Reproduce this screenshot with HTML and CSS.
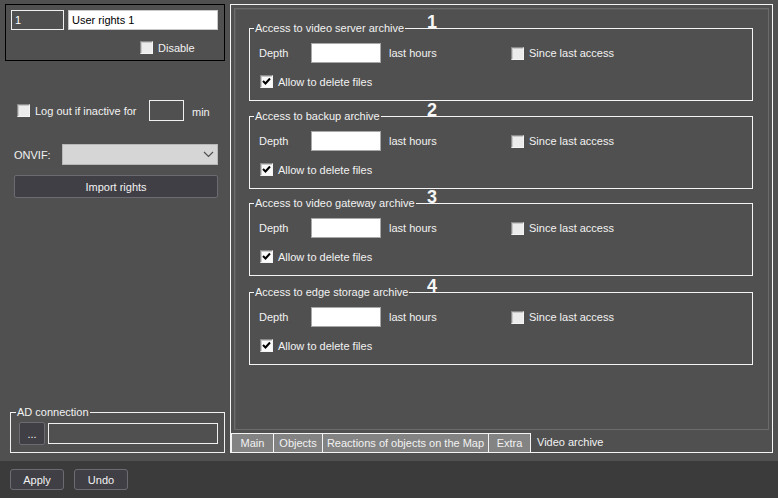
FILE: index.html
```html
<!DOCTYPE html>
<html lang="en">
  <head>
    <meta charset="UTF-8" />
    <title>User rights</title>
    <link rel="stylesheet" href="styles.css">
  </head>
  <body>
    <div class="window">
      <div class="main">
        <!-- left column -->
        <div class="side">
          <div class="user-box">
            <div class="user-row">
              <input class="field-dark num" type="text" value="1" />
              <input class="field-light name" type="text" value="User rights 1" />
            </div>
            <div class="disable-row">
              <span class="check"></span>
              <span class="check-label">Disable</span>
            </div>
          </div>

          <div class="logout-row">
            <span class="check"></span>
            <span class="logout-label">Log out if inactive for</span>
            <input class="field-dark minutes" type="text" value="" />
            <span class="min-label">min</span>
          </div>

          <div class="onvif-row">
            <span class="onvif-label">ONVIF:</span>
            <div class="select">
              <svg width="11" height="7" viewBox="0 0 11 7"><polyline points="1,1 5.5,5.5 10,1" fill="none" stroke="#505050" stroke-width="1.2"/></svg>
            </div>
          </div>

          <button class="btn import">Import rights</button>

          <fieldset class="ad-box">
            <legend>AD connection</legend>
            <div class="ad-row">
              <button class="btn dots">...</button>
              <input class="field-dark ad-field" type="text" value="" />
            </div>
          </fieldset>
        </div>

        <!-- right panel -->
        <div class="panel">
          <div class="page">
            <fieldset class="group g1">
              <legend>Access to video server archive</legend>
              <span class="mark">1</span>
              <div class="row depth-row">
                <span class="depth">Depth</span>
                <input class="hours" type="text" value="" />
                <span class="last">last hours</span>
                <span class="check"></span>
                <span class="check-label">Since last access</span>
              </div>
              <div class="row delete-row">
                <span class="check on"><svg width="11" height="11" viewBox="0 0 11 11"><path d="M2 5 L4.5 7.5 L9 2.5" fill="none" stroke="#000" stroke-width="2"/></svg></span>
                <span class="check-label">Allow to delete files</span>
              </div>
            </fieldset>

            <fieldset class="group g2">
              <legend>Access to backup archive</legend>
              <span class="mark">2</span>
              <div class="row depth-row">
                <span class="depth">Depth</span>
                <input class="hours" type="text" value="" />
                <span class="last">last hours</span>
                <span class="check"></span>
                <span class="check-label">Since last access</span>
              </div>
              <div class="row delete-row">
                <span class="check on"><svg width="11" height="11" viewBox="0 0 11 11"><path d="M2 5 L4.5 7.5 L9 2.5" fill="none" stroke="#000" stroke-width="2"/></svg></span>
                <span class="check-label">Allow to delete files</span>
              </div>
            </fieldset>

            <fieldset class="group g3">
              <legend>Access to video gateway archive</legend>
              <span class="mark">3</span>
              <div class="row depth-row">
                <span class="depth">Depth</span>
                <input class="hours" type="text" value="" />
                <span class="last">last hours</span>
                <span class="check"></span>
                <span class="check-label">Since last access</span>
              </div>
              <div class="row delete-row">
                <span class="check on"><svg width="11" height="11" viewBox="0 0 11 11"><path d="M2 5 L4.5 7.5 L9 2.5" fill="none" stroke="#000" stroke-width="2"/></svg></span>
                <span class="check-label">Allow to delete files</span>
              </div>
            </fieldset>

            <fieldset class="group g4">
              <legend>Access to edge storage archive</legend>
              <span class="mark">4</span>
              <div class="row depth-row">
                <span class="depth">Depth</span>
                <input class="hours" type="text" value="" />
                <span class="last">last hours</span>
                <span class="check"></span>
                <span class="check-label">Since last access</span>
              </div>
              <div class="row delete-row">
                <span class="check on"><svg width="11" height="11" viewBox="0 0 11 11"><path d="M2 5 L4.5 7.5 L9 2.5" fill="none" stroke="#000" stroke-width="2"/></svg></span>
                <span class="check-label">Allow to delete files</span>
              </div>
            </fieldset>
          </div>

          <div class="tabs">
            <span class="tab t-main">Main</span>
            <span class="tab t-objects">Objects</span>
            <span class="tab t-reactions">Reactions of objects on the Map</span>
            <span class="tab t-extra">Extra</span>
            <span class="tab-active">Video archive</span>
          </div>
        </div>
      </div>

      <div class="footer">
        <button class="btn foot">Apply</button>
        <button class="btn foot">Undo</button>
      </div>
    </div>
  </body>
</html>
```

FILE: styles.css
```css
* {
  margin: 0;
  padding: 0;
  box-sizing: border-box;
}

body {
  width: 778px;
  height: 498px;
  overflow: hidden;
  background: #505050;
  font-family: 'Liberation Sans', Arial, sans-serif;
  font-size: 11px;
  color: #f2f2f2;
}
.window {
  display: flex;
  flex-direction: column;
  height: 498px;
}
.main {
  display: flex;
  height: 461px;
}

/* --- inputs, checks, buttons --- */
input {
  font-family: inherit;
  font-size: 11px;
  outline: none;
}
.field-dark {
  background: #505050;
  border: 1px solid #f0f0f0;
  color: #fff;
  padding: 0 3px;
}
.field-light {
  background: #fff;
  border: 1px solid #c8c8c8;
  color: #000;
  padding: 0 3px;
}
.check {
  flex: none;
  display: inline-flex;
  align-items: center;
  justify-content: center;
  width: 13px;
  height: 13px;
  background: #ececec;
  border: 1px solid;
  border-color: #8a8a8a #f4f4f4 #f4f4f4 #8a8a8a;
  box-shadow: inset 1px 1px 0 #c9c9c9;
}
.check.on {
  background: #fafafa;
}
.check-label {
  margin-left: 5px;
  white-space: nowrap;
}
.btn {
  background: #403f46;
  border: 1px solid #6c6b72;
  border-radius: 2px;
  color: #f2f2f2;
  font-family: inherit;
  font-size: 11px;
}

/* --- left column --- */
.side {
  width: 230px;
  flex: none;
  display: flex;
  flex-direction: column;
  padding: 4px 0 0 5px;
}
.user-box {
  width: 220px;
  height: 57px;
  border: 1px solid #000;
  padding: 5px 0 0 5px;
}
.user-row {
  display: flex;
  gap: 4px;
}
.num {
  width: 53px;
  height: 20px;
}
.name {
  width: 150px;
  height: 20px;
}
.disable-row {
  display: flex;
  align-items: center;
  margin: 11px 0 0 129px;
}
.logout-row {
  display: flex;
  align-items: center;
  margin: 39px 0 0 12px;
}
.logout-label {
  width: 114px;
  margin-left: 5px;
}
.minutes {
  width: 35px;
  height: 21px;
}
.min-label {
  margin: 3px 0 0 8px;
}
.onvif-row {
  display: flex;
  align-items: center;
  margin: 23px 0 0 9px;
}
.onvif-label {
  width: 48px;
}
.select {
  width: 156px;
  height: 21px;
  background: #d6d6d6;
  border: 1px solid #b8b8b8;
  display: flex;
  align-items: center;
  justify-content: flex-end;
  padding-right: 3px;
}
.import {
  width: 204px;
  height: 23px;
  margin: 10px 0 0 9px;
}
.ad-box {
  margin: auto 0 8px 5px;
  width: 215px;
  border: 1px solid #f0f0f0;
  padding: 0 0 7px 8px;
}
.ad-box legend {
  margin-left: -3px;
  padding: 0 1px;
  line-height: 14px;
}
.ad-row {
  display: flex;
  align-items: center;
  gap: 3px;
  margin-top: 3px;
}
.dots {
  width: 26px;
  height: 23px;
}
.ad-field {
  width: 170px;
  height: 21px;
}

/* --- right panel --- */
.panel {
  width: 543px;
  height: 449px;
  margin-top: 4px;
  border: 1px solid #f4f4f4;
  display: flex;
  flex-direction: column;
}
.page {
  margin: 3px;
  height: 422px;
  border: 1px solid #6b6b6b;
  box-shadow: inset 1px 1px 0 #5a5a5a;
  padding-top: 12px;
}
.group {
  position: relative;
  margin: 0 0 8px 14px;
  width: 504px;
  border: 1px solid #f4f4f4;
  padding: 0 0 12px 0;
}
.group.g2 {
  margin-bottom: 7px;
}
.group.g3 {
  margin-bottom: 9px;
}
.group legend {
  margin-left: 4px;
  padding: 0 1px;
  line-height: 14px;
  white-space: nowrap;
}
.mark {
  position: absolute;
  left: 177px;
  top: -22px;
  font-size: 18px;
  line-height: 18px;
  font-weight: bold;
  color: #f6f6f6;
}
.row {
  display: flex;
  align-items: center;
  padding-left: 9px;
}
.depth-row {
  margin-top: 8px;
}
.depth {
  width: 52px;
}
.hours {
  width: 70px;
  height: 20px;
  background: #fff;
  border: 1px solid #a8a8a8;
}
.last {
  width: 122px;
  margin-left: 8px;
}
.delete-row {
  margin: 12px 0 0 1px;
}

.tabs {
  display: flex;
  height: 19px;
  margin-top: auto;
}
.tab {
  height: 19px;
  border: 1px solid #f4f4f4;
  border-bottom: none;
  background: #838383;
  display: flex;
  align-items: center;
  justify-content: center;
  white-space: nowrap;
  margin-left: -1px;
}
.t-main {
  margin-left: 0;
  width: 43px;
}
.t-objects {
  width: 50px;
}
.t-reactions {
  width: 167px;
}
.t-extra {
  width: 43px;
}
.tab-active {
  padding: 2px 0 0 6px;
  line-height: 14px;
}

/* --- footer --- */
.footer {
  flex: 1;
  background: #3c3b3c;
  display: flex;
  gap: 10px;
  padding: 8px 0 0 10px;
}
.foot {
  width: 54px;
  height: 21px;
  border-radius: 3px;
}
```
